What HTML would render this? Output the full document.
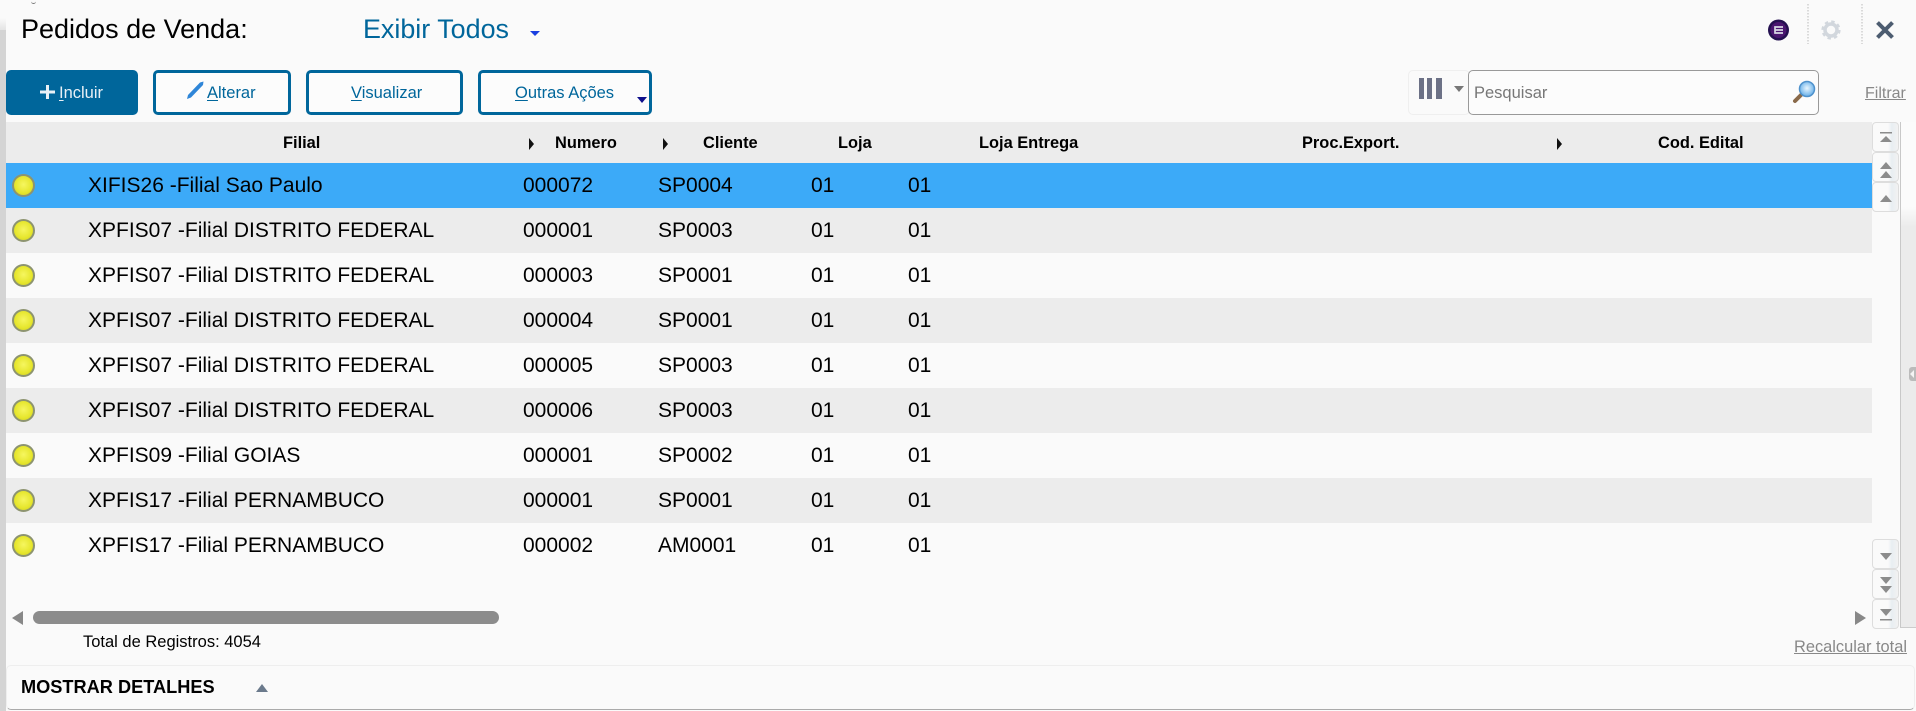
<!DOCTYPE html>
<html lang="pt">
<head>
<meta charset="utf-8">
<title>Pedidos de Venda</title>
<style>
html,body{margin:0;padding:0;width:1916px;height:711px;overflow:hidden;background:#fafafa;font-family:"Liberation Sans",sans-serif;color:#000}
.a{position:absolute;white-space:nowrap}
.row{position:absolute;left:6px;width:1866px;height:45px}
.g{background:#ececec}
.s{background:#3caaf8}
.t{position:absolute;white-space:nowrap;font-size:21px;line-height:24px;top:11px}
.led{position:absolute;left:6px;top:11px;width:19px;height:19px;border-radius:50%;border:2px solid #8d9470;background:radial-gradient(circle at 50% 45%,#f6f660 0,#e6e62c 60%,#c6c628 100%)}
.h{position:absolute;top:133px;font-size:16.4px;font-weight:bold;line-height:20px;white-space:nowrap}
.btn{position:absolute;top:70px;height:45px;box-sizing:border-box;border:3px solid #00669b;border-radius:5px;background:#fcfcfc}
.bt{position:absolute;top:84px;font-size:16.5px;line-height:19px;color:#00669b;white-space:nowrap}
.bt u{text-underline-offset:2px}
.sb{position:absolute;left:1872px;width:27px;height:30px;box-sizing:border-box;border:1px solid #ddd;border-radius:4px;background:linear-gradient(90deg,#fafafa 0,#fafafa 60%,#e8eef2 75%,#f2f2f2 100%)}
</style>
</head>
<body>
<!-- left strip -->
<div class="a" style="left:0;top:30px;width:6px;height:681px;background:#d4d4d4"></div>
<div class="a" style="left:0;top:0;width:6px;height:30px;background:linear-gradient(180deg,#fafafa 0,#fafafa 60%,#e4e4e4 100%)"></div>
<div class="a" style="left:31px;top:0;width:5px;height:3px;border-bottom:1px solid #777;border-radius:0 0 3px 3px"></div>

<!-- title -->
<div class="a" style="left:21px;top:14px;font-size:27px;line-height:31px">Pedidos de Venda:</div>
<div class="a" style="left:363px;top:14px;font-size:26.9px;line-height:31px;color:#00669b">Exibir Todos</div>
<div class="a" style="left:530px;top:31px;width:0;height:0;border-left:5.5px solid transparent;border-right:5.5px solid transparent;border-top:5px solid #1a3fe0"></div>

<!-- top-right icons -->
<svg class="a" style="left:1760px;top:0" width="156" height="60" viewBox="1760 0 156 60">
  <circle cx="1778.5" cy="30" r="10.5" fill="#241050"/>
  <circle cx="1778.5" cy="30" r="8" fill="#4a1670"/>
  <path d="M1783 27h-8v6h8M1775 30h8" stroke="#d8d8e4" stroke-width="1.700" fill="none"/>
  <path d="M1808 4V44M1862 4V44" stroke="#cfcfcf" stroke-width="1.500" stroke-dasharray="1.500 1.500" fill="none"/>
  <circle cx="1831" cy="30" r="6" fill="none" stroke="#d2d7dd" stroke-width="3.500"/>
  <circle cx="1831" cy="30" r="8.500" fill="none" stroke="#d2d7dd" stroke-width="2.200" stroke-dasharray="3.500 3.170"/>
  <path d="M1877.500 22.500L1892.500 37.500M1892.500 22.500L1877.500 37.500" stroke="#4c5c70" stroke-width="4" fill="none"/>
</svg>

<!-- buttons -->
<div class="btn" style="left:6px;width:132px;background:#00669b"></div>
<svg class="a" style="left:40px;top:85px" width="15" height="14"><path d="M7.500 0V14M0 7H15" stroke="#e8f0f6" stroke-width="3"/></svg>
<div class="bt" style="left:59px;color:#e8f0f6"><u>I</u>ncluir</div>

<div class="btn" style="left:153px;width:138px"></div>
<svg class="a" style="left:186px;top:80px" width="19" height="20"><path d="M1 19L2 15L14 2.500L17.500 1.500L17 5L5 17.500Z" fill="#2f86d8"/></svg>
<div class="bt" style="left:207px"><u>A</u>lterar</div>

<div class="btn" style="left:306px;width:157px"></div>
<div class="bt" style="left:351px"><u>V</u>isualizar</div>

<div class="btn" style="left:478px;width:174px"></div>
<div class="bt" style="left:515px"><u>O</u>utras Ações</div>
<div class="a" style="left:637px;top:97px;width:0;height:0;border-left:5.500px solid transparent;border-right:5.500px solid transparent;border-top:6px solid #10108c"></div>

<!-- column select + search -->
<div class="a" style="left:1408px;top:70px;width:62px;height:45px;box-sizing:border-box;border:1px solid #efefef;border-radius:5px"></div>
<div class="a" style="left:1419px;top:78px;width:5px;height:21px;background:#6c7186"></div>
<div class="a" style="left:1427px;top:78px;width:5px;height:21px;background:#6c7186"></div>
<div class="a" style="left:1436px;top:78px;width:6px;height:21px;background:#6c7186"></div>
<div class="a" style="left:1454px;top:86px;width:0;height:0;border-left:5.500px solid transparent;border-right:5.500px solid transparent;border-top:6px solid #777"></div>
<div class="a" style="left:1468px;top:70px;width:351px;height:45px;box-sizing:border-box;border:1px solid #999;border-radius:5px;background:#fcfcfc"></div>
<div class="a" style="left:1474px;top:84px;font-size:16.500px;line-height:19px;color:#777">Pesquisar</div>
<svg class="a" style="left:1790px;top:78px" width="28" height="28" viewBox="0 0 28 28">
  <defs><radialGradient id="m" cx="50%" cy="45%" r="60%"><stop offset="0" stop-color="#e8f6ff"/><stop offset="1" stop-color="#5aa8e6"/></radialGradient></defs>
  <path d="M12 16L5 23" stroke="#8a6a4a" stroke-width="4" stroke-linecap="round"/>
  <circle cx="17" cy="11" r="7.500" fill="url(#m)" stroke="#4f92cc" stroke-width="1.500"/>
</svg>
<div class="a" style="left:1865px;top:84px;font-size:16px;line-height:19px;color:#888;text-decoration:underline">Filtrar</div>

<!-- header -->
<div class="a" style="left:6px;top:122px;width:1866px;height:41px;background:#ececec"></div>
<div class="h" style="left:283px">Filial</div>
<div class="a" style="left:529px;top:138px;width:0;height:0;border-top:6px solid transparent;border-bottom:6px solid transparent;border-left:5px solid #111"></div>
<div class="h" style="left:555px">Numero</div>
<div class="a" style="left:663px;top:138px;width:0;height:0;border-top:6px solid transparent;border-bottom:6px solid transparent;border-left:5px solid #111"></div>
<div class="h" style="left:703px">Cliente</div>
<div class="h" style="left:838px">Loja</div>
<div class="h" style="left:979px">Loja Entrega</div>
<div class="h" style="left:1302px">Proc.Export.</div>
<div class="a" style="left:1557px;top:138px;width:0;height:0;border-top:6px solid transparent;border-bottom:6px solid transparent;border-left:5px solid #111"></div>
<div class="h" style="left:1658px">Cod. Edital</div>

<!-- rows -->
<div class="row s" style="top:163px"><i class="led"></i><span class="t" style="left:82px">XIFIS26 -Filial Sao Paulo</span><span class="t" style="left:517px">000072</span><span class="t" style="left:652px">SP0004</span><span class="t" style="left:805px">01</span><span class="t" style="left:902px">01</span></div>
<div class="row g" style="top:208px"><i class="led"></i><span class="t" style="left:82px">XPFIS07 -Filial DISTRITO FEDERAL</span><span class="t" style="left:517px">000001</span><span class="t" style="left:652px">SP0003</span><span class="t" style="left:805px">01</span><span class="t" style="left:902px">01</span></div>
<div class="row" style="top:253px"><i class="led"></i><span class="t" style="left:82px">XPFIS07 -Filial DISTRITO FEDERAL</span><span class="t" style="left:517px">000003</span><span class="t" style="left:652px">SP0001</span><span class="t" style="left:805px">01</span><span class="t" style="left:902px">01</span></div>
<div class="row g" style="top:298px"><i class="led"></i><span class="t" style="left:82px">XPFIS07 -Filial DISTRITO FEDERAL</span><span class="t" style="left:517px">000004</span><span class="t" style="left:652px">SP0001</span><span class="t" style="left:805px">01</span><span class="t" style="left:902px">01</span></div>
<div class="row" style="top:343px"><i class="led"></i><span class="t" style="left:82px">XPFIS07 -Filial DISTRITO FEDERAL</span><span class="t" style="left:517px">000005</span><span class="t" style="left:652px">SP0003</span><span class="t" style="left:805px">01</span><span class="t" style="left:902px">01</span></div>
<div class="row g" style="top:388px"><i class="led"></i><span class="t" style="left:82px">XPFIS07 -Filial DISTRITO FEDERAL</span><span class="t" style="left:517px">000006</span><span class="t" style="left:652px">SP0003</span><span class="t" style="left:805px">01</span><span class="t" style="left:902px">01</span></div>
<div class="row" style="top:433px"><i class="led"></i><span class="t" style="left:82px">XPFIS09 -Filial GOIAS</span><span class="t" style="left:517px">000001</span><span class="t" style="left:652px">SP0002</span><span class="t" style="left:805px">01</span><span class="t" style="left:902px">01</span></div>
<div class="row g" style="top:478px"><i class="led"></i><span class="t" style="left:82px">XPFIS17 -Filial PERNAMBUCO</span><span class="t" style="left:517px">000001</span><span class="t" style="left:652px">SP0001</span><span class="t" style="left:805px">01</span><span class="t" style="left:902px">01</span></div>
<div class="row" style="top:523px"><i class="led"></i><span class="t" style="left:82px">XPFIS17 -Filial PERNAMBUCO</span><span class="t" style="left:517px">000002</span><span class="t" style="left:652px">AM0001</span><span class="t" style="left:805px">01</span><span class="t" style="left:902px">01</span></div>

<!-- vertical scroll buttons -->
<div class="sb" style="top:122px"></div>
<div class="sb" style="top:152px"></div>
<div class="sb" style="top:182px"></div>
<div class="sb" style="top:539px"></div>
<div class="sb" style="top:569px"></div>
<div class="sb" style="top:599px"></div>
<svg class="a" style="left:1872px;top:122px" width="28" height="510" viewBox="0 0 28 510" fill="#8c8c8c">
  <rect x="8" y="10" width="12" height="1.500"/>
  <path d="M14 14L20 20H8Z"/>
  <path d="M14 40L20 47H8Z"/><path d="M14 49L20 56H8Z"/>
  <path d="M14 73L20 80H8Z"/>
  <path d="M8 431H20L14 438Z"/>
  <path d="M8 455H20L14 462Z"/><path d="M8 464H20L14 471Z"/>
  <path d="M8 487H20L14 494Z"/>
  <rect x="8" y="497" width="12" height="1.500"/>
</svg>

<!-- right panel -->
<div class="a" style="left:1900px;top:122px;width:16px;height:506px;box-sizing:border-box;border-left:1px solid #c8c8c8;background:linear-gradient(180deg,#fbfbfb 0,#fbfbfb 85px,#ebebeb 105px,#ebebeb 100%);border-bottom:1px solid #ccc"></div>
<div class="a" style="left:1909px;top:367px;width:7px;height:14px;background:#bbb;border-radius:3px 0 0 3px"></div>
<div class="a" style="left:1910px;top:370px;width:0;height:0;border-top:4px solid transparent;border-bottom:4px solid transparent;border-right:4px solid #f4f4f4"></div>

<!-- horizontal scroll -->
<div class="a" style="left:12px;top:611px;width:0;height:0;border-top:7px solid transparent;border-bottom:7px solid transparent;border-right:11px solid #888"></div>
<div class="a" style="left:33px;top:611px;width:466px;height:13px;background:#8c8c8c;border-radius:7px"></div>
<div class="a" style="left:1855px;top:611px;width:0;height:0;border-top:7px solid transparent;border-bottom:7px solid transparent;border-left:11px solid #888"></div>

<!-- footer -->
<div class="a" style="left:83px;top:632px;font-size:16.500px;line-height:20px">Total de Registros: 4054</div>
<div class="a" style="left:1794px;top:637px;font-size:16.400px;line-height:20px;color:#888;text-decoration:underline">Recalcular total</div>
<div class="a" style="left:6px;top:665px;width:1909px;height:45px;box-sizing:border-box;border:1px solid #eee;border-bottom:1px solid #aaa;border-radius:5px"></div>
<div class="a" style="left:21px;top:677px;font-size:18.200px;font-weight:bold;line-height:21px">MOSTRAR DETALHES</div>
<div class="a" style="left:256px;top:684px;width:0;height:0;border-left:6px solid transparent;border-right:6px solid transparent;border-bottom:8px solid #6b7a8c"></div>
</body>
</html>
